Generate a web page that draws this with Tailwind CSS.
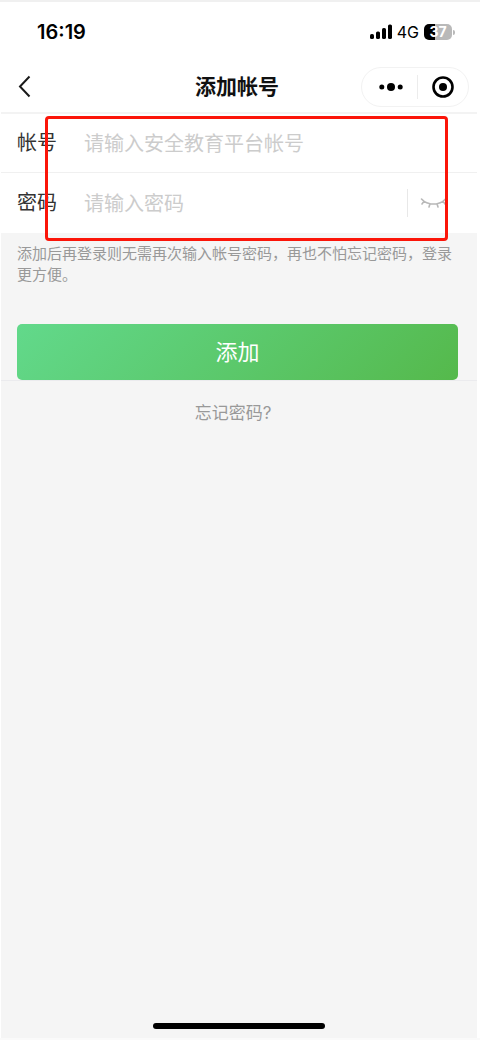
<!DOCTYPE html>
<html lang="zh-CN">
  <head>
    <meta charset="UTF-8" />
    <meta name="viewport" content="width=device-width, initial-scale=1.0" />
    <title>添加帐号</title>
    <script src="https://cdn.jsdelivr.net/npm/@tailwindcss/browser@4"></script>
  </head>
  <body class="bg-white font-['Inter','Noto_Sans_CJK_SC',sans-serif]">
    <div class="flex min-h-dvh flex-col border-t-2 border-b-2 border-t-[#f0f0f0] border-b-[#fafafa] pr-[3px] pl-px">
      <!-- status bar -->
      <div class="flex h-15 items-center justify-between pr-[22px] pl-9 text-black">
        <span class="text-[20px] font-semibold">16:19</span>
        <div class="flex items-center gap-[5px]">
          <svg class="h-4 w-[22px]" viewBox="0 0 22 16" fill="currentColor" aria-hidden="true">
            <rect x="0" y="10" width="4" height="5" rx="1.6" />
            <rect x="6" y="7.500" width="4" height="7.500" rx="1.6" />
            <rect x="12" y="4" width="4" height="11" rx="1.6" />
            <rect x="18" y="0.500" width="4" height="14.500" rx="1.6" />
          </svg>
          <span class="text-base">4G</span>
          <div class="flex items-center gap-px">
            <span class="flex h-4 w-7 items-center justify-center rounded-[5px] bg-linear-to-r from-black from-38% to-[#b9b9b9] to-38% text-sm font-bold text-white">37</span>
            <span class="h-[5px] w-[2px] rounded-r-full bg-[#b9b9b9]"></span>
          </div>
        </div>
      </div>

      <!-- nav bar -->
      <header class="grid h-[52px] grid-cols-[1fr_auto_1fr] items-center border-b-2 border-[#f3f3f3] px-2">
        <button type="button" aria-label="返回" class="ml-2 w-4">
          <svg class="h-6 w-4" viewBox="0 0 16 24" fill="none" stroke="#1a1a1a" stroke-width="2">
            <path d="M12.500 1.500 3 11.500 12.500 21.500" />
          </svg>
        </button>
        <h1 class="pr-1 text-[21px] font-bold text-[#111]">添加帐号</h1>
        <div class="flex h-10 w-[108px] items-center justify-self-end rounded-full border border-[#f2f2f2]">
          <button type="button" aria-label="更多" class="flex flex-1 items-center justify-center pl-1">
            <svg class="h-2 w-6" viewBox="0 0 24 8" fill="#000">
              <circle cx="2.800" cy="4" r="2.500" />
              <circle cx="12" cy="4" r="4" />
              <circle cx="21.200" cy="4" r="2.500" />
            </svg>
          </button>
          <span class="h-6 w-px bg-[#ececec]"></span>
          <button type="button" aria-label="关闭" class="flex flex-1 items-center justify-center">
            <svg class="size-6" viewBox="0 0 24 24">
              <circle cx="12" cy="12" r="9.500" fill="none" stroke="#000" stroke-width="2.600" />
              <circle cx="12" cy="12" r="4" fill="#000" />
            </svg>
          </button>
        </div>
      </header>

      <form class="flex flex-1 flex-col bg-[#f5f5f5]">
        <div class="relative bg-white">
          <div class="flex h-[59px] items-center border-b border-[#f0f0f0] pl-4">
            <label for="account" class="w-[67px] text-[20px] text-[#333]">帐号</label>
            <input id="account" type="text" placeholder="请输入安全教育平台帐号" class="min-w-0 flex-1 pt-px text-[20px] outline-none placeholder:text-[#ccc]" />
          </div>
          <div class="flex h-15 items-center pr-[29px] pl-4">
            <label for="password" class="w-[67px] text-[20px] text-[#333]">密码</label>
            <input id="password" type="password" placeholder="请输入密码" class="min-w-0 flex-1 pt-px text-[20px] outline-none placeholder:text-[#ccc]" />
            <button type="button" aria-label="显示密码" class="flex h-7 items-center border-l border-[#e8e8e8] pl-3">
              <svg class="h-3 w-7" viewBox="0 0 28 12" fill="none" stroke="#b8b8b8" stroke-width="1.600" stroke-linecap="round">
                <path d="M1.500 2C7.500 8.700 19.500 8.700 25.500 2M4 4.300 2 7M10 6.800 9 10M17 6.800 18 10M23 4.300 25 7" />
              </svg>
            </button>
          </div>
          <!-- highlight frame around both inputs -->
          <div class="pointer-events-none absolute top-[2px] right-[29px] -bottom-2 left-11 rounded-[4px] border-3 border-[#fb1509]"></div>
        </div>

        <p class="px-4 pt-[10px] text-[15px] leading-[21px] text-[#999]">添加后再登录则无需再次输入帐号密码，再也不怕忘记密码，登录更方便。</p>

        <div class="mt-[39px] border-b border-[#ebebee] pr-[19px] pl-4">
          <button type="submit" class="h-14 w-full rounded-[5px] bg-linear-135 from-[#62d98b] to-[#55b94b] text-[22px] text-white">添加</button>
        </div>
        <a href="#" class="mt-5 mr-3 self-center text-[17px] leading-6 text-[#999]">忘记密码?</a>

        <!-- home indicator -->
        <div class="mt-auto mb-[9px] h-[6px] w-[172px] self-center rounded-full bg-black"></div>
      </form>
    </div>
  </body>
</html>
